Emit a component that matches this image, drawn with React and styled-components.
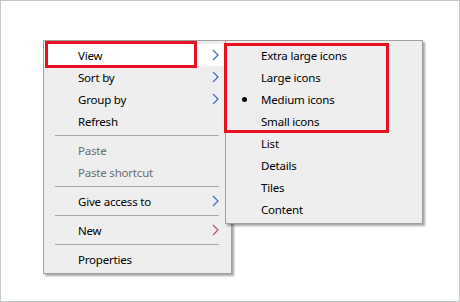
import React from 'react';
import styled, {createGlobalStyle} from 'styled-components';

const Global = createGlobalStyle`
    html, body {margin:0; padding:0; background:#ffffff;}
    #root {width:460px; height:302px;}
`
const Frame = styled.div`
    box-sizing:border-box;
    width:460px;
    height:302px;
    border:1px solid #c3c9c9;
    background:#ffffff;
    padding:39px 0 0 42px;
    font-family:"Noto Sans", "Open Sans", sans-serif;
    font-size:11.5px;
    letter-spacing:-0.2px;
`
const Menu = styled.div`
    position:relative;
    box-sizing:border-box;
    width:${p => p.w}px;
    padding:3px 0;
    background:#eeeeee;
    border:1px solid #a0a0a0;
    box-shadow:2px 2px 2px rgba(0,0,0,0.35);
`
const Flyout = styled(Menu)`
    position:absolute;
    left:181px;
    top:-1px;
`
const Row = styled.div`
    display:flex;
    align-items:center;
    height:22px;
    padding-left:${p => p.indent}px;
    color:${p => p.disabled ? '#6d6d6d' : '#000000'};
    background:${p => p.active ? '#ffffff' : 'transparent'};
    white-space:nowrap;
`
const Mark = styled.span`
    width:5px;
    height:5px;
    margin-right:${p => p.gap}px;
    border-radius:50%;
    background:${p => p.on ? '#000000' : 'transparent'};
`
const Label = styled.span`
    flex:1;
`
const Arrow = styled.svg`
    width:7px;
    height:12px;
    margin-right:12px;
`
const Separator = styled.div`
    height:1px;
    margin:3px 12px 3px 11px;
    background:#a8a8a8;
`
const Highlight = styled.div`
    position:absolute;
    box-sizing:border-box;
    left:${p => p.x}px;
    top:${p => p.y}px;
    width:${p => p.w}px;
    height:${p => p.h}px;
    border:3px solid #e81123;
    pointer-events:none;
`

function Chevron({color}) {
    return (
        <Arrow viewBox="0 0 7 12">
            <path d="M1 1 L6 6 L1 11" fill="none" stroke={color} strokeWidth="1.2" />
        </Arrow>
    );
}

const mainItems = [
    {label:'View', sub:true, active:true},
    {label:'Sort by', sub:true},
    {label:'Group by', sub:true},
    {label:'Refresh'},
    'sep',
    {label:'Paste', disabled:true},
    {label:'Paste shortcut', disabled:true},
    'sep',
    {label:'Give access to', sub:true},
    'sep',
    {label:'New', sub:true, arrow:'#c0506a'},
    'sep',
    {label:'Properties'},
];

const viewItems = [
    'Extra large icons', 'Large icons', 'Medium icons', 'Small icons',
    'List', 'Details', 'Tiles', 'Content',
];

export default function App() {
    const rows = mainItems.map((item, i) =>
        item === 'sep' ? <Separator key={i} /> :
        <Row key={i} indent={34} disabled={item.disabled} active={item.active}>
            <Label>{item.label}</Label>
            {item.sub && <Chevron color={item.arrow || '#3d6cc4'} />}
        </Row>
    );
    const subRows = viewItems.map(label =>
        <Row key={label} indent={16}>
            <Mark on={label === 'Medium icons'} gap={14} />
            <Label>{label}</Label>
        </Row>
    );
    return (
        <Frame>
            <Global />
            <Menu w={189}>
                {rows}
                <Highlight x={1} y={0} w={152} h={27} />
                <Flyout w={198}>
                    {subRows}
                    <Highlight x={-2} y={2} w={165} h={90} />
                </Flyout>
            </Menu>
        </Frame>
    );
}
